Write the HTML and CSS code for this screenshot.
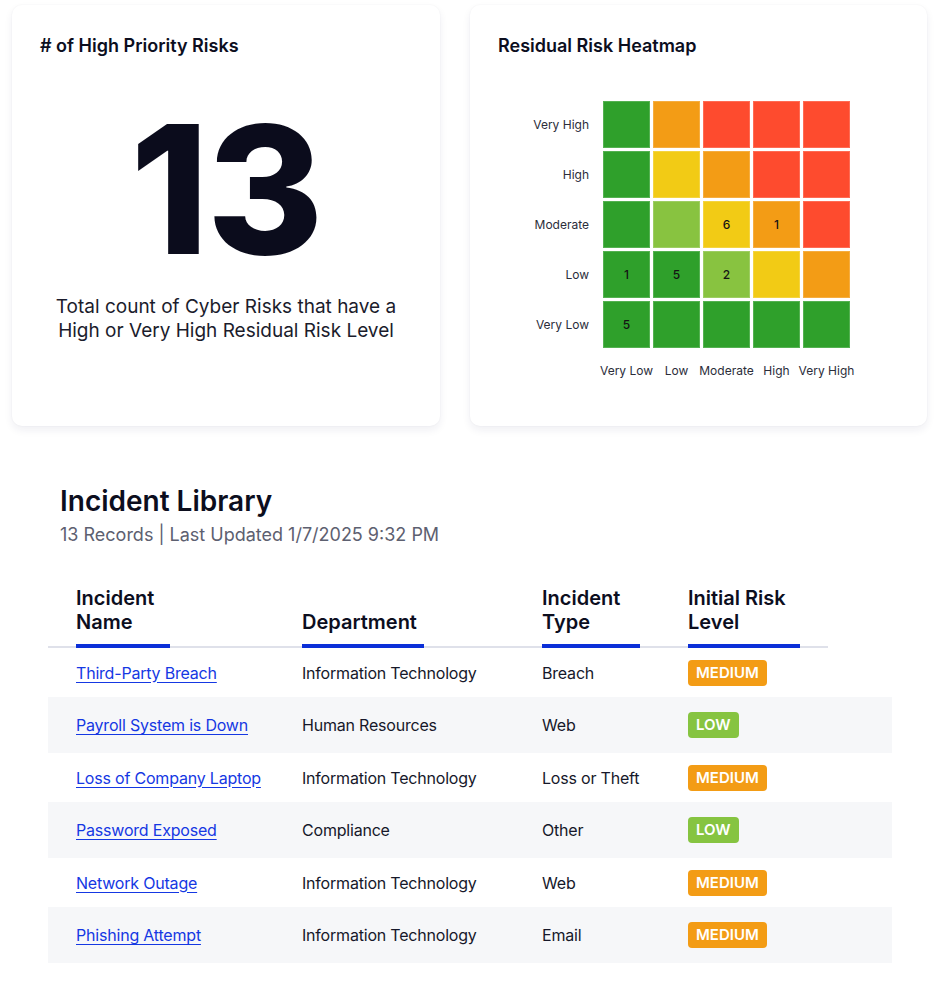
FILE: index.html
```html
<!DOCTYPE html>
<html lang="en">
<head>
    <meta charset="UTF-8">
    <link rel="stylesheet" href="styles.css">
</head>
<body>
    <div class="page">
        <div class="top-row">
            <section class="card card-count">
                <h2 class="card-title"># of High Priority Risks</h2>
                <div class="big-number">13</div>
                <p class="count-desc">Total count of Cyber Risks that have a<br>High or Very High Residual Risk Level</p>
            </section>

            <section class="card card-heatmap">
                <h2 class="card-title">Residual Risk Heatmap</h2>
                <div class="heatmap">
                    <div class="hm-label">Very High</div>
                    <div class="cell green"></div>
                    <div class="cell orange"></div>
                    <div class="cell red"></div>
                    <div class="cell red"></div>
                    <div class="cell red"></div>

                    <div class="hm-label">High</div>
                    <div class="cell green"></div>
                    <div class="cell yellow"></div>
                    <div class="cell orange"></div>
                    <div class="cell red"></div>
                    <div class="cell red"></div>

                    <div class="hm-label">Moderate</div>
                    <div class="cell green"></div>
                    <div class="cell lime"></div>
                    <div class="cell yellow">6</div>
                    <div class="cell orange">1</div>
                    <div class="cell red"></div>

                    <div class="hm-label">Low</div>
                    <div class="cell green">1</div>
                    <div class="cell green">5</div>
                    <div class="cell lime">2</div>
                    <div class="cell yellow"></div>
                    <div class="cell orange"></div>

                    <div class="hm-label">Very Low</div>
                    <div class="cell green">5</div>
                    <div class="cell green"></div>
                    <div class="cell green"></div>
                    <div class="cell green"></div>
                    <div class="cell green"></div>

                    <div></div>
                    <div class="hm-axis"><span>Very Low</span></div>
                    <div class="hm-axis"><span>Low</span></div>
                    <div class="hm-axis"><span>Moderate</span></div>
                    <div class="hm-axis"><span>High</span></div>
                    <div class="hm-axis"><span>Very High</span></div>
                </div>
            </section>
        </div>

        <section class="library">
            <h1 class="library-title">Incident Library</h1>
            <p class="library-meta">13 Records | Last Updated 1/7/2025 9:32 PM</p>

            <div class="table">
                <div class="thead">
                    <div class="th"><div class="th-label w-name">Incident<br>Name</div></div>
                    <div class="th"><div class="th-label w-dept">Department</div></div>
                    <div class="th"><div class="th-label w-type">Incident<br>Type</div></div>
                    <div class="th"><div class="th-label w-risk">Initial Risk<br>Level</div></div>
                </div>

                <div class="tr">
                    <div class="td"><a href="#">Third-Party Breach</a></div>
                    <div class="td">Information Technology</div>
                    <div class="td">Breach</div>
                    <div class="td"><span class="badge medium">MEDIUM</span></div>
                </div>
                <div class="tr">
                    <div class="td"><a href="#">Payroll System is Down</a></div>
                    <div class="td">Human Resources</div>
                    <div class="td">Web</div>
                    <div class="td"><span class="badge low">LOW</span></div>
                </div>
                <div class="tr">
                    <div class="td"><a href="#">Loss of Company Laptop</a></div>
                    <div class="td">Information Technology</div>
                    <div class="td">Loss or Theft</div>
                    <div class="td"><span class="badge medium">MEDIUM</span></div>
                </div>
                <div class="tr">
                    <div class="td"><a href="#">Password Exposed</a></div>
                    <div class="td">Compliance</div>
                    <div class="td">Other</div>
                    <div class="td"><span class="badge low">LOW</span></div>
                </div>
                <div class="tr">
                    <div class="td"><a href="#">Network Outage</a></div>
                    <div class="td">Information Technology</div>
                    <div class="td">Web</div>
                    <div class="td"><span class="badge medium">MEDIUM</span></div>
                </div>
                <div class="tr">
                    <div class="td"><a href="#">Phishing Attempt</a></div>
                    <div class="td">Information Technology</div>
                    <div class="td">Email</div>
                    <div class="td"><span class="badge medium">MEDIUM</span></div>
                </div>
            </div>
        </section>
    </div>
</body>
</html>
```

FILE: styles.css
```css
body {
    margin: 0;
    background: #ffffff;
    font-family: Inter, "Noto Sans", sans-serif;
    color: #0c0e1e;
}

.page {
    padding: 5px 12px 0 12px;
}

.top-row {
    display: flex;
    gap: 30px;
}

.card {
    background: #fff;
    border-radius: 10px;
    box-shadow: 0 4px 8px rgba(30, 30, 80, 0.07), 0 0 2px rgba(30, 30, 80, 0.05);
    padding: 30px 28px 28px 28px;
    height: 421px;
    box-sizing: border-box;
}

.card-count {
    width: 428px;
}

.card-heatmap {
    width: 457px;
}

.card-title {
    margin: 0;
    font-size: 18px;
    line-height: 22px;
    font-weight: 600;
}

/* big number card */
.big-number {
    margin-top: 44px;
    font-size: 178px;
    line-height: 178px;
    font-weight: 800;
    text-align: center;
    letter-spacing: -2px;
    color: #0b0c1c;
}

.count-desc {
    margin: 16px 0 0 0;
    font-size: 19px;
    line-height: 24px;
    text-align: center;
    color: #1b1c2c;
}

/* heatmap */
.heatmap {
    margin: 44px 0 0 37px;
    display: grid;
    grid-template-columns: 65px repeat(5, 47px);
    grid-auto-rows: 47px;
    gap: 3px;
}

.hm-label {
    font-size: 12px;
    color: #2b2d3a;
    white-space: nowrap;
    padding-right: 11px;
    display: flex;
    align-items: center;
    justify-content: flex-end;
}

.hm-axis {
    display: flex;
    justify-content: center;
    padding-top: 12px;
    font-size: 12px;
    color: #2b2d3a;
    white-space: nowrap;
}

.cell {
    display: flex;
    align-items: center;
    justify-content: center;
    font-size: 12px;
    font-weight: 500;
    color: #141414;
    box-shadow: inset 0 0 0 1px rgba(255, 255, 255, 0.18);
}

.green { background: #2fa02b; }
.lime { background: #88c340; }
.yellow { background: #f2cb15; }
.orange { background: #f39c15; }
.red { background: #fe4b2e; }

/* incident library */
.library {
    margin-top: 24px;
    padding: 34px 0 32px 36px;
}

.library-title {
    margin: 0 0 5px 12px;
    font-size: 28px;
    line-height: 34px;
    font-weight: 600;
}

.library-meta {
    margin: 0 0 39px 12px;
    font-size: 18px;
    line-height: 24px;
    color: #5d6070;
}

.table {
    width: 844px;
}

.thead {
    width: 780px;
    display: grid;
    grid-template-columns: 226px 240px 146px 168px;
    align-items: end;
    border-bottom: 2px solid #dfe1ea;
}

.th {
    padding-left: 28px;
    font-size: 20px;
    line-height: 24px;
    font-weight: 600;
}

.th-label {
    padding-bottom: 10px;
    border-bottom: 4px solid #0b2fd8;
    margin-bottom: -2px;
}

.w-name { width: 94px; }
.w-dept { width: 122px; }
.w-type { width: 98px; }
.w-risk { width: 112px; }

.tr {
    display: grid;
    grid-template-columns: 226px 240px 146px 232px;
    align-items: center;
    height: 49px;
    font-size: 16px;
    letter-spacing: -0.2px;
    color: #16182a;
}

.tr:nth-child(odd) {
    height: 56px;
    background: #f6f7f9;
}

.td {
    padding-left: 28px;
}

.td a {
    color: #1538e3;
    text-decoration: underline;
    text-underline-offset: 3px;
}

.badge {
    display: inline-block;
    height: 26px;
    line-height: 26px;
    padding: 0 8px;
    border-radius: 4px;
    color: #fff;
    font-size: 15px;
    font-weight: 600;
    letter-spacing: 0;
}

.badge.medium { background: #f39c15; }
.badge.low { background: #86c441; }
```
